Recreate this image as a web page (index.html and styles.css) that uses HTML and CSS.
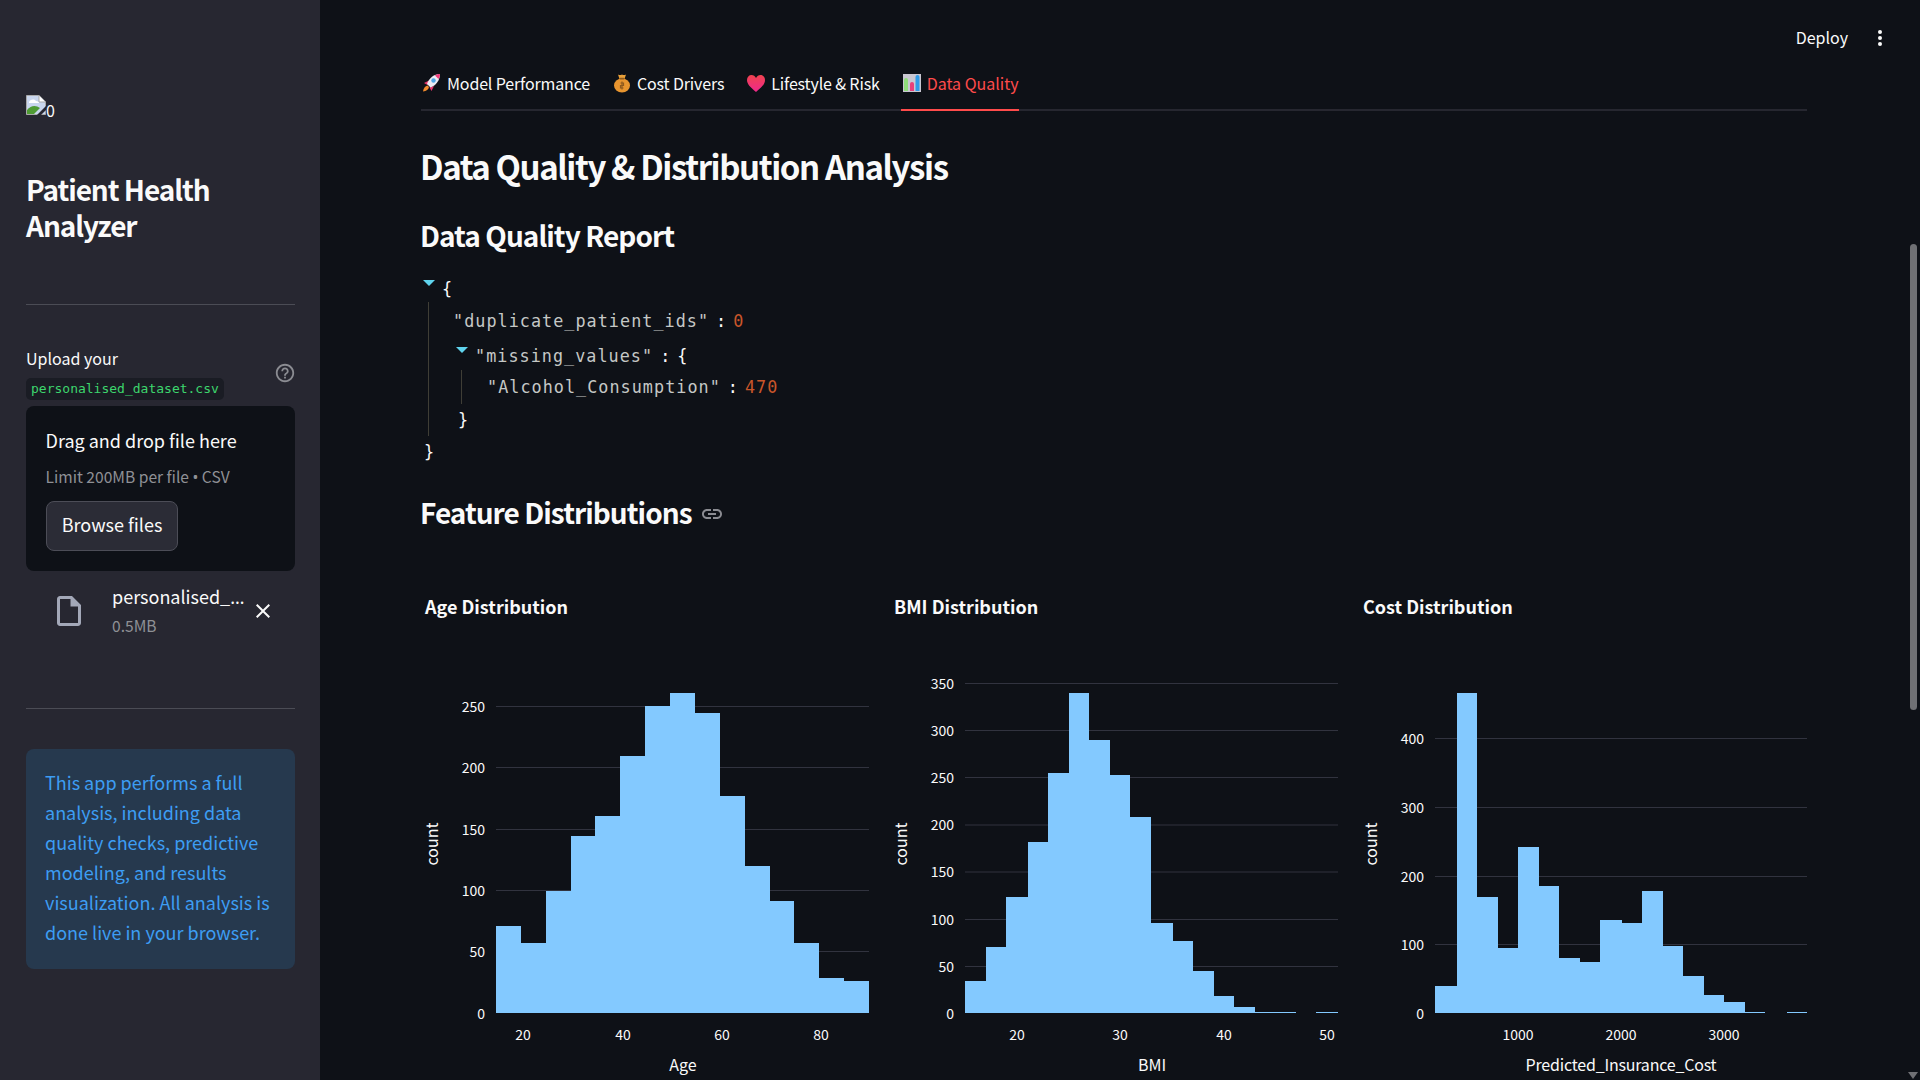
FILE: index.html
```html
<!DOCTYPE html>
<html lang="en">
<head>
<meta charset="utf-8">
<title>Patient Health Analyzer</title>
<link rel="stylesheet" href="styles.css">
</head>
<body>
<div class="app">
  <aside class="sidebar">
    <div class="broken-img">
      <svg width="20" height="20" viewBox="0 0 20 20"><path d="M.5.5H13L19.500 7V19.500H.5Z" fill="#c9d6ee" stroke="#a9a9a9"/><path d="M13 .5V7H19.500" fill="#fff" stroke="#a9a9a9"/><path d="M3 7c2-3 5-3 7-1 2 0 3 1 3 2H3Z" fill="#fff"/><path d="M1 19v-4c4-5 9-5 13-2l-6 6Z" fill="#4f9b34"/><path d="M11 20 20 11v4l-5 5Z" fill="#272731"/></svg>
      <span class="broken-alt">0</span>
    </div>
    <h1 class="side-title">Patient Health Analyzer</h1>
    <hr class="side-rule side-rule-first">
    <div class="upload-head">
      <div>
        <div class="upload-label">Upload your</div>
        <code class="chip">personalised_dataset.csv</code>
      </div>
      <svg class="help" width="22" height="22" viewBox="0 0 24 24"><path fill="#8b8c92" d="M11 18h2v-2h-2v2zm1-16C6.480 2 2 6.480 2 12s4.480 10 10 10 10-4.480 10-10S17.520 2 12 2zm0 18c-4.410 0-8-3.590-8-8s3.590-8 8-8 8 3.590 8 8-3.590 8-8 8zm0-14c-2.210 0-4 1.790-4 4h2c0-1.100.9-2 2-2s2 .9 2 2c0 2-3 1.750-3 5h2c0-2.250 3-2.500 3-5 0-2.210-1.790-4-4-4z"/></svg>
    </div>
    <div class="dropzone">
      <div class="drop-title">Drag and drop file here</div>
      <div class="drop-limit">Limit 200MB per file <span class="latin-glyph">•</span> CSV</div>
      <button class="browse">Browse files</button>
    </div>
    <div class="file-row">
      <svg width="36" height="36" viewBox="0 0 24 24"><path fill="#a3a8b8" d="M14 2H6c-1.100 0-1.990.9-1.990 2L4 20c0 1.100.89 2 1.990 2H18c1.100 0 2-.9 2-2V8l-6-6zM6 20V4h7v5h5v11H6z"/></svg>
      <div class="file-meta">
        <div class="file-name">personalised_<span class="latin-glyph file-ellipsis">…</span></div>
        <div class="file-size">0.5MB</div>
      </div>
      <svg class="file-x" width="24" height="24" viewBox="0 0 24 24"><path fill="#fafafa" d="M19 6.410L17.590 5 12 10.590 6.410 5 5 6.410 10.590 12 5 17.590 6.410 19 12 13.410 17.590 19 19 17.590 13.410 12z"/></svg>
    </div>
    <hr class="side-rule side-rule-second">
    <div class="info">This app performs a full analysis, including data quality checks, predictive modeling, and results visualization. All analysis is done live in your browser.</div>
  </aside>

  <main class="main">
    <header class="topbar">
      <span class="deploy">Deploy</span>
      <span class="kebab"><i></i><i></i><i></i></span>
    </header>

    <nav class="tabs">
      <div class="tab">
        <svg width="20" height="20" viewBox="0 0 20 20"><path d="M5.500 12.500C3 13 1.500 15 1 18.500c3.500-.5 5.500-2 6-4.500Z" fill="#f08a2c"/><path d="M7 7.500 2 10l3.500 2ZM12 13l-2.500 5-2-3.500Z" fill="#e8386f"/><path d="M18 1C12 1 7 5 5 11l3.500 3.500C14 12.500 18 7 18 1Z" fill="#ecebf3"/><path d="M18 1c-2 0-3.500.5-5 1.500L16.500 6c1-1.500 1.500-3 1.500-5Z" fill="#ee3a78"/><circle cx="11.500" cy="7.500" r="2.200" fill="#4da6e6"/></svg>
        <span>Model Performance</span>
      </div>
      <div class="tab">
        <svg width="20" height="20" viewBox="0 0 20 20"><path d="M6 1.500c1.300.8 2.700.8 4 0 1.300.8 2.700.8 4 0L12.500 6h-5Z" fill="#e8a03a"/><ellipse cx="10" cy="12.500" rx="8" ry="7" fill="#e8952f"/><rect x="7.500" y="4.800" width="5" height="1.700" rx=".8" fill="#8f5a1e"/><path d="M10 8.500v8M8.500 10h3v2.500h-3V15h3" stroke="#8f5a1e" stroke-width="1.200" fill="none"/></svg>
        <span>Cost Drivers</span>
      </div>
      <div class="tab">
        <svg width="20" height="20" viewBox="0 0 20 20"><defs><linearGradient id="heartFill" x1="0" y1="0" x2="0" y2="1"><stop offset="0" stop-color="#f0434f"/><stop offset="1" stop-color="#f0288c"/></linearGradient></defs><path d="M10 19C4 14 1 11 1 7c0-3 2-5 4.500-5C7.500 2 9 3 10 5c1-2 2.500-3 4.500-3C17 2 19 4 19 7c0 4-3 7-9 12Z" fill="url(#heartFill)"/></svg>
        <span>Lifestyle &amp; Risk</span>
      </div>
      <div class="tab tab-active">
        <svg width="20" height="20" viewBox="0 0 20 20"><rect x="1" y="1" width="18" height="18" fill="#c9c7d2"/><path d="M2 18V7a2 2 0 0 1 4 0V18Z" fill="#8fdc7a"/><path d="M8 18V11a2 2 0 0 1 4 0V18Z" fill="#e8407a"/><path d="M13.500 18V4a2 2 0 0 1 4 0V18Z" fill="#2f9be8"/></svg>
        <span>Data Quality</span>
      </div>
    </nav>

    <h2 class="page-title">Data Quality &amp; Distribution Analysis</h2>
    <h3 class="section-title section-report">Data Quality Report</h3>

    <div class="json">
      <div class="row row-open"><i class="caret"></i><span class="brace">{</span></div>
      <div class="json-body">
        <div class="row row-dup"><span class="key">"duplicate_patient_ids"</span><span class="colon">:</span><span class="num">0</span></div>
        <div class="row row-missing"><i class="caret"></i><span class="key">"missing_values"</span><span class="colon">:</span><span class="brace">{</span></div>
        <div class="json-inner">
          <div class="row row-alcohol"><span class="key">"Alcohol_Consumption"</span><span class="colon">:</span><span class="num">470</span></div>
        </div>
        <div class="row row-close-inner"><span class="brace">}</span></div>
      </div>
      <div class="row row-close"><span class="brace">}</span></div>
    </div>

    <h3 class="section-title section-features">Feature Distributions
      <svg class="link-icon" width="24" height="24" viewBox="0 0 24 24"><path fill="#8b8c92" d="M3.900 12c0-1.710 1.390-3.100 3.100-3.100h4V7H7c-2.760 0-5 2.240-5 5s2.240 5 5 5h4v-1.900H7c-1.710 0-3.100-1.390-3.100-3.100zM8 13h8v-2H8v2zm9-6h-4v1.900h4c1.710 0 3.100 1.390 3.100 3.100s-1.390 3.100-3.100 3.100h-4V17h4c2.760 0 5-2.240 5-5s-2.240-5-5-5z"/></svg>
    </h3>

    <section class="charts">
      <figure class="chart">
        <figcaption class="chart-title">Age Distribution</figcaption>
        <svg class="plot" width="448" height="440" viewBox="0 0 448 440">
          <g class="grid"><path d="M75 66.500H448M75 127.500H448M75 189.500H448M75 250.500H448M75 311.500H448"/></g>
          <path class="bars" d="M75 373V286H100V303H125V251H150V196H174V176H199V116H224V66H249V53H274V73H299V156H324V226H349V261H373V303H398V338H423V341H448V373Z"/>
          <g class="ticks ticks-y">
            <text x="64" y="72">250</text><text x="64" y="133">200</text><text x="64" y="195">150</text><text x="64" y="256">100</text><text x="64" y="317">50</text><text x="64" y="379">0</text>
          </g>
          <g class="ticks ticks-x">
            <text x="102" y="400">20</text><text x="202" y="400">40</text><text x="301" y="400">60</text><text x="400" y="400">80</text>
          </g>
          <text class="axis" x="262" y="431">Age</text>
          <text class="axis" transform="translate(17 204) rotate(-90)">count</text>
        </svg>
      </figure>
      <figure class="chart">
        <figcaption class="chart-title">BMI Distribution</figcaption>
        <svg class="plot" width="448" height="440" viewBox="0 0 448 440">
          <g class="grid"><path d="M75 43.500H448M75 90.500H448M75 137.500H448M75 185H448M75 232H448M75 279.500H448M75 326.500H448"/></g>
          <path class="bars" d="M75 373V341H96V307H116V257H138V202H158V133H179V53H199V100H220V135H240V177H261V283H283V301H303V331H324V356H344V367H365V372H406V373H426V372H448V373Z"/>
          <g class="ticks ticks-y">
            <text x="64" y="49">350</text><text x="64" y="96">300</text><text x="64" y="143">250</text><text x="64" y="190">200</text><text x="64" y="237">150</text><text x="64" y="285">100</text><text x="64" y="332">50</text><text x="64" y="379">0</text>
          </g>
          <g class="ticks ticks-x">
            <text x="127" y="400">20</text><text x="230" y="400">30</text><text x="334" y="400">40</text><text x="437" y="400">50</text>
          </g>
          <text class="axis" x="262" y="431">BMI</text>
          <text class="axis" transform="translate(17 204) rotate(-90)">count</text>
        </svg>
      </figure>
      <figure class="chart">
        <figcaption class="chart-title">Cost Distribution</figcaption>
        <svg class="plot" width="448" height="440" viewBox="0 0 448 440">
          <g class="grid"><path d="M76 98.500H448M76 167.500H448M76 236.500H448M76 304.500H448"/></g>
          <path class="bars" d="M76 373V346H98V53H118V257H139V308H159V207H180V246H200V318H221V322H241V280H263V283H283V251H304V306H324V336H345V355H365V362H386V372H406V373H428V372H448V373Z"/>
          <g class="ticks ticks-y">
            <text x="65" y="104">400</text><text x="65" y="173">300</text><text x="65" y="242">200</text><text x="65" y="310">100</text><text x="65" y="379">0</text>
          </g>
          <g class="ticks ticks-x">
            <text x="159" y="400">1000</text><text x="262" y="400">2000</text><text x="365" y="400">3000</text>
          </g>
          <text class="axis axis-long" x="262" y="431">Predicted_Insurance_Cost</text>
          <text class="axis" transform="translate(18 204) rotate(-90)">count</text>
        </svg>
      </figure>
    </section>
  </main>
</div>
<div class="scroll-thumb"></div>
<div class="scroll-arrow"></div>
</body>
</html>
```

FILE: styles.css
```css
* { box-sizing: border-box; }
html, body { margin: 0; height: 100%; overflow: hidden; }
body {
  background: #0e1117;
  color: #fafafa;
  font-family: "Noto Sans CJK SC", "Noto Sans", sans-serif;
}
.app { display: flex; height: 1080px; overflow: hidden; }
.latin-glyph { font-family: "Noto Sans", sans-serif; }

/* sidebar */
.sidebar {
  width: 320px;
  flex: none;
  background: #272731;
  padding: 95px 25px 0 26px;
}
.broken-img { display: flex; align-items: flex-end; height: 20px; }
.broken-alt { font-size: 16px; line-height: 16px; margin-bottom: -3px; }
.side-title {
  margin: 56px 0 0;
  font-size: 28px;
  line-height: 36px;
  font-weight: 600;
  letter-spacing: -1.050px;
  width: 220px;
}
.side-rule { border: 0; height: 1px; margin: 0; background: #4b4c55; }
.side-rule-first { margin-top: 61px; }
.side-rule-second { margin-top: 72px; }
.upload-head {
  display: flex;
  justify-content: space-between;
  align-items: flex-start;
  margin-top: 41px;
  height: 54px;
}
.upload-label { font-size: 16px; line-height: 24px; }
.chip {
  display: inline-block;
  margin-top: 8px;
  padding: 0 5px;
  height: 22px;
  line-height: 22px;
  border-radius: 5px;
  background: #1a1c24;
  color: #3dd56d;
  font-family: "DejaVu Sans Mono", "Liberation Mono", monospace;
  font-size: 13px;
}
.help { margin: 16px -1px 0 0; }
.dropzone {
  margin-top: 6px;
  background: #0e1117;
  border-radius: 8px;
  padding: 21px 20px 20px 19.500px;
  height: 165px;
}
.drop-title { font-size: 18px; line-height: 26px; }
.drop-limit { margin-top: 12px; font-size: 15.600px; line-height: 22px; color: #8e9095; }
.browse {
  display: block;
  margin: 13px 0 0 .5px;
  width: 132px;
  height: 50px;
  padding: 0 0 4px;
  background: #2b2c36;
  border: 1px solid #4c4d57;
  border-radius: 8px;
  color: #fafafa;
  font-family: inherit;
  font-size: 18px;
}
.file-row {
  display: flex;
  align-items: center;
  margin-top: 14px;
  padding-left: 25px;
  height: 51px;
}
.file-meta { margin-left: 25px; width: 136px; padding-bottom: 3px; }
.file-name { font-size: 18px; line-height: 26px; white-space: nowrap; }
.file-ellipsis { letter-spacing: 2px; }
.file-size { margin-top: 5px; font-size: 15.600px; line-height: 20px; color: #8e9095; }
.file-x { margin-left: 3px; flex: none; }
.info {
  margin-top: 40px;
  padding: 18px 20px 22px 19px;
  border-radius: 8px;
  background: #26394e;
  color: #3d9df3;
  font-size: 18px;
  line-height: 30px;
}

/* main */
.main { flex: 1; min-width: 0; padding: 0 113px 0 101px; }
.topbar {
  display: flex;
  justify-content: flex-end;
  align-items: center;
  height: 60px;
  padding: 13px 38px 0 0;
  margin-right: -113px;
}
.deploy { font-size: 16px; line-height: 24px; margin-right: 30px; }
.kebab { display: flex; flex-direction: column; gap: 2px; margin-top: 2px; }
.kebab i { display: block; width: 4px; height: 4px; border-radius: 50%; background: #fafafa; }

.tabs { display: flex; gap: 21px; height: 51px; box-shadow: inset 0 -2px 0 #262730; }
.tab {
  display: flex;
  align-items: center;
  gap: 5px;
  height: 51px;
  padding: 0 0 5px 1px;
  font-size: 16px;
  letter-spacing: -.15px;
}
.tab-active { color: #ff4b4b; box-shadow: inset 0 -2px 0 #ff4b4b; letter-spacing: 0; }

.page-title {
  margin: 31px 0 0 -1px;
  font-size: 33px;
  line-height: 48px;
  font-weight: 600;
  letter-spacing: -1.400px;
}
.section-title {
  margin: 0 0 0 -1px;
  font-size: 28px;
  line-height: 40px;
  font-weight: 600;
  letter-spacing: -.95px;
}
.section-report { margin-top: 25px; }
.section-features { margin-top: 28px; display: flex; align-items: center; gap: 8px; }
.link-icon { margin-top: 4px; }

/* json tree */
.json {
  margin-top: 19px;
  font-family: "DejaVu Sans Mono", "Liberation Mono", monospace;
  font-size: 16.800px;
  letter-spacing: 1.030px;
}
.row { display: flex; align-items: center; }
.key { color: #c5c8c6; }
.brace { color: #fafafa; }
.num { color: #c9562a; }
.colon { color: #fafafa; margin: 0 6px 0 7px; }
.caret {
  width: 0;
  height: 0;
  margin: 0 7px 12px 0;
  border-left: 6px solid transparent;
  border-right: 6px solid transparent;
  border-top: 6px solid #5fd4ee;
}
.row-open { height: 30px; padding-left: 2px; }
.row-dup { height: 34px; padding-left: 32px; }
.row-missing { height: 36px; padding-left: 35px; }
.row-alcohol { height: 26px; padding-left: 26px; }
.row-close-inner { height: 40px; padding-left: 37px; }
.row-close { height: 24px; padding-left: 3px; }
.json-body { position: relative; }
.json-body::before {
  content: "";
  position: absolute;
  left: 7px; top: -2px; bottom: 4px;
  width: 1px;
  background: #3f3e36;
}
.json-inner { position: relative; margin-left: 40px; }
.json-inner::before {
  content: "";
  position: absolute;
  left: 0; top: -4px; bottom: -4px;
  width: 1px;
  background: #3f3e36;
}

/* charts */
.charts {
  display: grid;
  grid-template-columns: repeat(3, 448px);
  gap: 21px;
  margin-top: 60px;
}
.chart { margin: 0; }
.chart-title {
  padding-left: 4px;
  font-size: 18px;
  line-height: 28px;
  font-weight: 700;
  margin-bottom: 20px;
}
.plot { display: block; overflow: visible; }
.plot text { fill: #fafafa; font-family: "Noto Sans CJK SC", "Noto Sans", sans-serif; }
.grid path { stroke: #31333f; stroke-width: 1; fill: none; }
.bars { fill: #83c9ff; }
.ticks text { font-size: 14px; }
.ticks-y text { text-anchor: end; }
.ticks-x text { text-anchor: middle; }
.axis { font-size: 16px; text-anchor: middle; }
.axis-long { letter-spacing: -.2px; }

/* page scrollbar */
.scroll-thumb {
  position: fixed;
  left: 1910px; top: 244px;
  width: 7px; height: 466px;
  border-radius: 4px;
  background: #6f7074;
}
.scroll-arrow {
  position: fixed;
  left: 1908px; top: 1072px;
  width: 0; height: 0;
  border-left: 5.500px solid transparent;
  border-right: 5.500px solid transparent;
  border-top: 7px solid #6f7074;
}
```
